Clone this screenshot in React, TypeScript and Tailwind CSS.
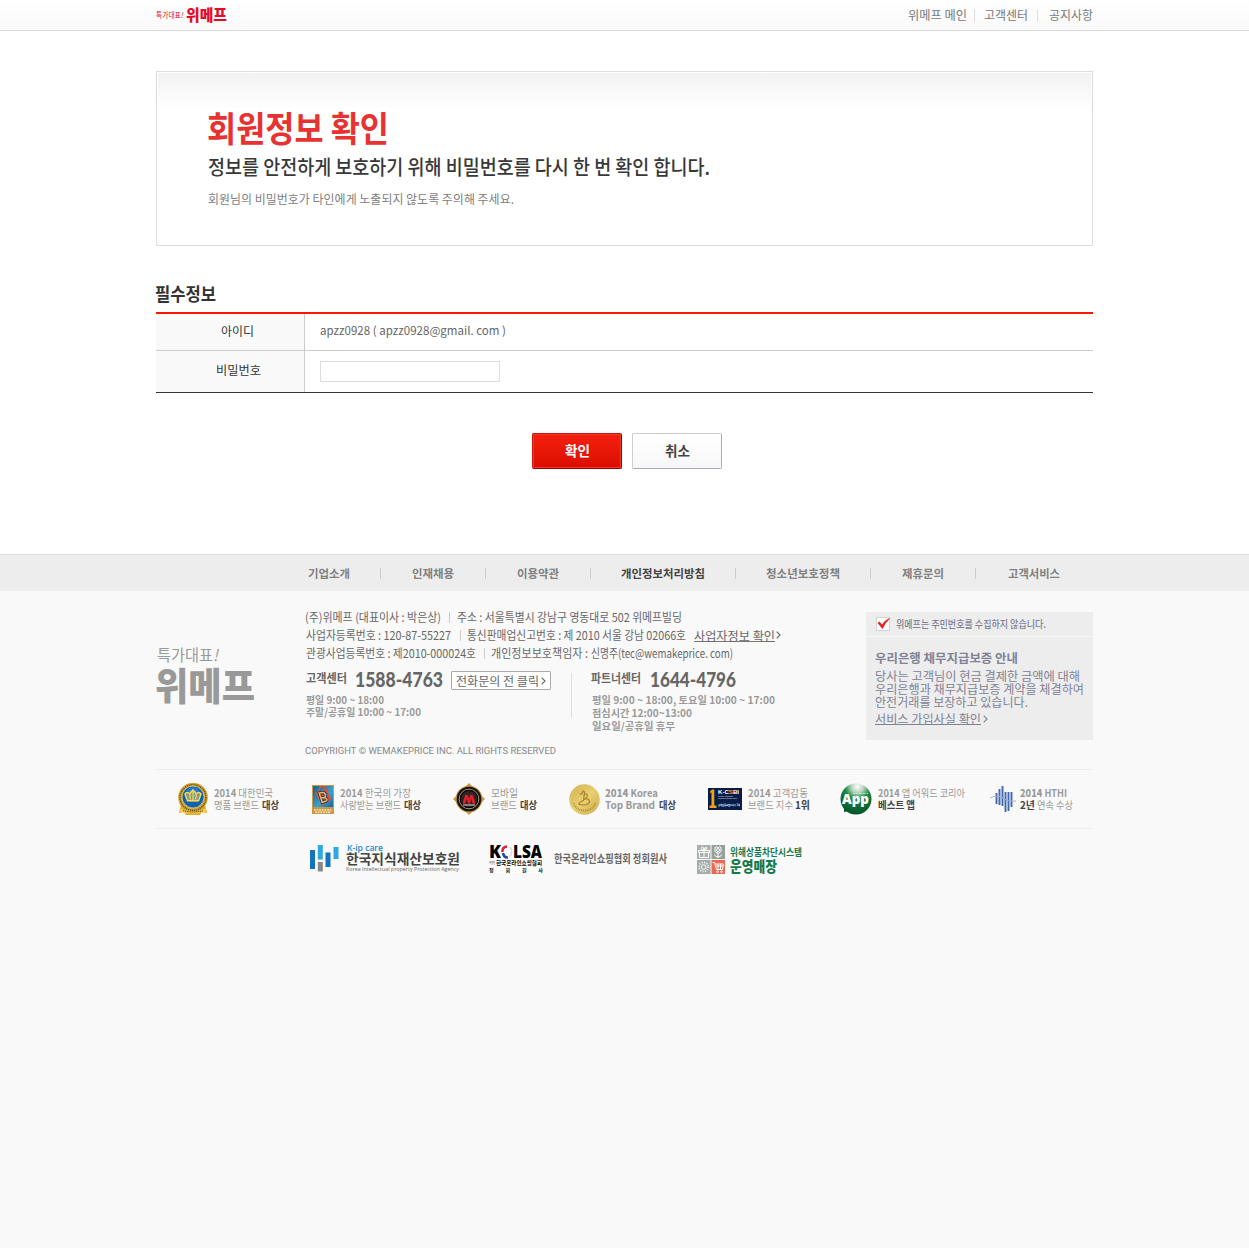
import React, { useLayoutEffect, useRef, useState } from "react";

/* Single line of text stretched or condensed to the width of its box. */
function Fit({ className = "", children }: { className?: string; children: React.ReactNode }) {
  const box = useRef<HTMLSpanElement>(null);
  const inner = useRef<HTMLSpanElement>(null);
  const [scale, setScale] = useState(1);
  useLayoutEffect(() => {
    if (box.current && inner.current) {
      const natural = inner.current.getBoundingClientRect().width;
      if (natural > 0) setScale(box.current.clientWidth / natural);
    }
  }, []);
  return (
    <span ref={box} className={`block shrink-0 whitespace-nowrap ${className}`}>
      <span ref={inner} className="inline-block origin-left" style={{ transform: `scaleX(${scale})` }}>
        {children}
      </span>
    </span>
  );
}

function Sep({ className }: { className: string }) {
  return <span className={`block w-px shrink-0 ${className}`} />;
}

function Chevron({ className = "" }: { className?: string }) {
  return (
    <svg className={`h-[8px] w-[5px] shrink-0 ${className}`} viewBox="0 0 5 8" fill="none" stroke="currentColor" strokeWidth="1.1">
      <path d="M.7.7 4 4 .7 7.3" />
    </svg>
  );
}

function CrownMedal() {
  return (
    <svg className="h-[32px] w-[30px]" viewBox="0 0 30 32">
      <path d="M3 22 1 30l5-1 2 3h14l2-3 5 1-2-8z" fill="#e0ac2a" />
      <circle cx="15" cy="14.500" r="14.800" fill="#d6a632" />
      <circle cx="15" cy="14.500" r="12.900" fill="none" stroke="#5b4723" strokeWidth="1.500" strokeDasharray="1.1 .9" />
      <circle cx="15" cy="14" r="11" fill="#0d62b5" stroke="#f0ca58" strokeWidth=".8" />
      <circle cx="15" cy="11" r="7" fill="#2b8bd8" opacity=".6" />
      <path d="M9.400 17.500 7 11q2-3 5 0 .5-2.500 3-3.500 2.500 1 3 3.500 3-3 5 0l-2.400 6.500z" fill="#e6b83c" fillOpacity=".5" stroke="#f8d85e" strokeWidth="1.400" />
      <path d="M15 6v11M9.300 18h11.400M11.500 12l1 4M18.500 12l-1 4" stroke="#f8d85e" strokeWidth="1.200" />
      <path d="M2 25.500q13 5 26 0l1 3q-14 4-28 0z" fill="#f6cf4a" />
      <path d="M5 27.700q10 2.300 20 0" fill="none" stroke="#80601b" strokeWidth="1.200" strokeDasharray="1.500 .6" />
    </svg>
  );
}

function BrandTile() {
  return (
    <svg className="h-[29px] w-[22px]" viewBox="0 0 22 29">
      <defs>
        <linearGradient id="tile" x1="0" y1="0" x2="1" y2="1">
          <stop offset="0" stopColor="#1d5f8e" />
          <stop offset=".6" stopColor="#3f9fc8" />
          <stop offset="1" stopColor="#15669c" />
        </linearGradient>
      </defs>
      <rect width="22" height="29" fill="#c8994a" />
      <rect x="1" y="1" width="20" height="21" fill="url(#tile)" />
      <path d="M7 6q0-4.500 3.500-4.500T14 5" fill="none" stroke="#dc5336" strokeWidth="1.500" />
      <path d="m3 7.500 11-3.500 5.500 10.500-9.500 6z" fill="#e44c2d" />
      <path d="m7.200 8 3 9.500 3.600-1.300q2.800-2-1.100-3.600 1.900-2.800-.6-4.800-2.300-.8-4.900.2zm1.500 5 3.700-.5" fill="none" stroke="#16436e" strokeWidth="3.200" />
      <path d="m7.200 8 3 9.500 3.600-1.300q2.800-2-1.100-3.600 1.900-2.800-.6-4.800-2.300-.8-4.900.2zm1.500 5 3.700-.5" fill="none" stroke="#f6b15e" strokeWidth="1.500" />
      <path d="M2 25h18M3 27.300h16" stroke="#efdbab" strokeWidth="1.500" strokeDasharray="2 .6" />
    </svg>
  );
}

function MobileBadge() {
  return (
    <svg className="h-[32px] w-[32px]" viewBox="0 0 32 32">
      <path d="M16 0 32 16 16 32 0 16z" fill="#c99c43" />
      <circle cx="16" cy="16" r="13.300" fill="#c08f35" />
      <circle cx="16" cy="16" r="12.300" fill="#17110e" />
      <circle cx="16" cy="16" r="9.800" fill="none" stroke="#b5a081" strokeWidth=".9" />
      <circle cx="16" cy="16" r="8.600" fill="#2e2525" stroke="#000" />
      <path d="m9.500 20.500 2.800-8.500h2.400L16 16l1.300-4h2.400l2.800 8.500h-3l-1-5-1.600 5h-1.800l-1.600-5-1 5z" fill="#ec1c2a" />
      <path d="M10 22h12" stroke="#f2eeee" strokeWidth=".9" />
    </svg>
  );
}

function GoldCoin() {
  return (
    <svg className="h-[31px] w-[31px]" viewBox="0 0 31 31">
      <defs>
        <linearGradient id="coin" x1="0" y1="0" x2="1" y2="1">
          <stop offset="0" stopColor="#cfae48" />
          <stop offset=".5" stopColor="#ead174" />
          <stop offset="1" stopColor="#c9a843" />
        </linearGradient>
      </defs>
      <circle cx="15.500" cy="15.500" r="15.200" fill="url(#coin)" />
      <circle cx="15.500" cy="15.500" r="13.500" fill="none" stroke="#dfc667" />
      <path d="M10.500 10q3 .5 3.500-3l1.500 1-1 8.500q-3.500 1-5 3.500 5 2 9.500 0 3.200-3-.5-5-2-.6-4 .7 4.600-2.500 3.700-5-1.200-1.600-3 .2" fill="none" stroke="#a77d22" strokeWidth="1.100" />
      <path d="M4.500 19q3 7.500 11 7.500T26.500 19" fill="none" stroke="#b08d36" strokeWidth="1.600" strokeDasharray="1 .8" />
    </svg>
  );
}

function Kcsbi() {
  return (
    <span className="flex h-[22px] w-[34px] bg-[#071d47] font-['Liberation_Sans'] font-bold text-white">
      <svg className="mt-[1px] ml-[1px] h-[19px] w-[8px] shrink-0" viewBox="0 0 8 19">
        <path d="M1 4V2.500L3 .5h2.300V16.500H7.500V19H.5v-2.500h2V3.500z" fill="#f5a01b" />
      </svg>
      <span className="flex flex-col">
        <Fit className="mt-[1px] ml-[1px] h-[6px] w-[21px] text-[6px] leading-[6px]">K-C<b className="text-[#f5a01b]">S</b>BI</Fit>
        <Fit className="ml-[1px] h-[3px] w-[15px] text-[2px] leading-[2px] opacity-70">Korean Customer</Fit>
        <Fit className="ml-[1px] h-[6px] w-[19px] text-[2px] leading-[1px] opacity-70">Surprised Brand Index</Fit>
        <Fit className="ml-[1px] h-[3px] w-[22px] text-[3px] leading-[3px]">고객감동브랜드지수 1위</Fit>
      </span>
    </span>
  );
}

function AppBadge() {
  return (
    <span className="relative block h-[32px] w-[32px]">
      <svg className="h-[32px] w-[32px]" viewBox="0 0 32 32">
        <defs>
          <radialGradient id="globe" cx=".55" cy=".1" r=".9">
            <stop offset="0" stopColor="#fff" />
            <stop offset=".22" stopColor="#b4d4bc" />
            <stop offset=".45" stopColor="#1a8743" />
            <stop offset="1" stopColor="#04522a" />
          </radialGradient>
        </defs>
        <path d="M4 24v5l5-1z" fill="#04532a" />
        <circle cx="16" cy="16" r="15.500" fill="url(#globe)" />
        <path d="M13 10.500h15" stroke="#d8eadd" strokeWidth=".8" strokeDasharray="1 .4" />
      </svg>
      <Fit className="absolute top-[8px] left-[2px] w-[27px] font-['Open_Sans'] text-[14px] leading-[16px] font-extrabold text-white">App</Fit>
    </span>
  );
}

function Hthi() {
  return (
    <svg className="-ml-px h-[28px] w-[27px]" viewBox="0 0 27 28" fill="none">
      <path d="M6.500 8v11M9.500 4v16M12.500 1v20M15.500 7v20M18.500 7v19M21.500 7v15" stroke="#4067b0" strokeWidth="1.900" />
      <path d="M0 13q8-4 13 0t13 3" stroke="#a3b0c5" strokeWidth="1" />
    </svg>
  );
}

function KipIcon() {
  return (
    <svg className="h-[27px] w-[29px]" viewBox="0 0 29 27">
      <path d="M0 5h5v19H0zM15.500 7.500h5V22h-5z" fill="#1473bc" />
      <path d="M7.800 0h5v14.500h-5zM23.500 2h5v12h-5z" fill="#2da9e1" />
      <path d="M7.800 17h5v9.500h-5z" fill="#888" />
    </svg>
  );
}

function Kolsa() {
  return (
    <span className="flex h-[28px] w-[54px] flex-col bg-white text-black">
      <span className="flex h-[14px] items-center font-['Open_Sans'] font-extrabold">
        <Fit className="w-[12px] text-[17px] leading-[14px]">K</Fit>
        <svg className="h-[14px] w-[12px]" viewBox="0 0 12 14" fill="none" strokeWidth="2.600">
          <path d="M6 1.500Q1 2 1.500 7" stroke="#df2135" />
          <path d="M2 8q1 5 5 4.500" stroke="#214a9c" />
          <path d="M9 2q3.500 5-.5 10" stroke="#d9dbe4" strokeWidth="1.500" />
        </svg>
        <Fit className="w-[29px] text-[17px] leading-[14px]">LSA</Fit>
      </span>
      <span className="mt-[1px] flex h-[6px] items-center">
        <Fit className="w-[6px] text-[3px] leading-[6px]">사단법인</Fit>
        <Fit className="ml-[1px] w-[46px] text-[6px] leading-[6px] font-bold">한국온라인쇼핑협회</Fit>
      </span>
      <span className="mt-[1px] flex h-[5px] justify-between text-[5px] leading-[5px] font-bold">
        <span>정</span><span>회</span><span>원</span><span>사</span>
      </span>
    </span>
  );
}

function SafeShop() {
  return (
    <svg className="h-[29px] w-[28px]" viewBox="0 0 28 29" fill="none">
      <path d="M0 0h13.500v14H0z" fill="#a9b0ab" />
      <path d="M14.500 0H28v14H14.500z" fill="#96a09a" />
      <path d="M0 15h13.500v14H0z" fill="#a5aca7" />
      <path d="M14.500 15H28v14H14.500z" fill="#ef674f" />
      <g stroke="#fff">
        <path d="M1.500 5.500h11v2h-11zM2.500 7.500v5h9v-5M7 5v8M7 5Q3 5 4.500 2.500T7 5q0-3 2.500-2.500T7 5" />
        <circle cx="21" cy="5" r="1.500" />
        <path d="M18 2.500l1.500-.7 1.500 1 1.500-1 1.500.7v4L22 8h-2l-2-1.500zM21 8v5m0-1q-3 0-3.500-2.500m3.500 2.500q3 0 3.500-2.500" />
        <circle cx="6.700" cy="22" r="2.300" />
        <circle cx="6.700" cy="22" r="4.600" strokeWidth="1.800" strokeDasharray="1 1.400" />
        <path d="M15.500 17.500h2l2 7h6l1-5.500H18M19 21h7M21 19v5M23.500 19v5" />
        <circle cx="20.500" cy="26.700" r=".9" />
        <circle cx="24.500" cy="26.700" r=".9" />
      </g>
    </svg>
  );
}

const topLinks = "text-[12px] leading-[18px] text-[#777]";

const footerMenu = [
  { label: "기업소개", cell: "w-[103px]", text: "w-[42px] text-[#808080]" },
  { label: "인재채용", cell: "w-[105px] pr-px", text: "w-[42px] text-[#808080]" },
  { label: "이용약관", cell: "w-[105px] pr-px", text: "w-[42px] text-[#808080]" },
  { label: "개인정보처리방침", cell: "w-[145px]", text: "w-[84px] text-[#444]" },
  { label: "청소년보호정책", cell: "w-[135px] pr-px", text: "w-[74px] text-[#808080]" },
  { label: "제휴문의", cell: "w-[105px] pr-px", text: "w-[42px] text-[#808080]" },
  { label: "고객서비스", cell: "w-[115px]", text: "w-[52px] text-[#808080]" },
];

const awards = [
  { icon: <CrownMedal />, cell: "w-[134px]", slot: "w-[36px]", top: "2014 대한민국", topW: "w-[59px]", a: "명품 브랜드", aW: "w-[45px] text-[#999]", b: "대상", bW: "ml-[3px] w-[17px] font-bold text-[#444]" },
  { icon: <BrandTile />, cell: "w-[141px]", slot: "w-[28px]", top: "2014 한국의 가장", topW: "w-[71px]", a: "사랑받는 브랜드", aW: "w-[61px] text-[#999]", b: "대상", bW: "ml-[3px] w-[17px] font-bold text-[#444]" },
  { icon: <MobileBadge />, cell: "w-[116px]", slot: "w-[38px]", top: "모바일", topW: "w-[27px]", a: "브랜드", aW: "w-[26px] text-[#999]", b: "대상", bW: "ml-[3px] w-[17px] font-bold text-[#444]" },
  { icon: <GoldCoin />, cell: "w-[139px]", slot: "w-[36px]", top: "2014 Korea", topW: "w-[53px] font-bold", a: "Top Brand", aW: "w-[50px] font-bold text-[#999]", b: "대상", bW: "ml-[4px] w-[17px] font-bold text-[#444]" },
  { icon: <Kcsbi />, cell: "w-[132px]", slot: "w-[40px]", top: "2014 고객감동", topW: "w-[60px]", a: "브랜드 지수", aW: "w-[45px] text-[#999]", b: "1위", bW: "ml-[2px] w-[15px] font-bold text-[#444]" },
  { icon: <AppBadge />, cell: "w-[151px]", slot: "w-[38px]", top: "2014 앱 어워드 코리아", topW: "w-[87px]", a: "베스트 앱", aW: "w-[37px] font-bold text-[#444]", b: "", bW: "" },
  { icon: <Hthi />, cell: "w-[102px]", slot: "w-[29px]", top: "2014 HTHI", topW: "w-[47px] font-bold", a: "2년", aW: "w-[15px] font-bold text-[#444]", b: "연속 수상", bW: "ml-[2px] w-[36px] text-[#999]" },
];

function Header() {
  return (
    <header className="h-[31px] border-b border-[#ddd] bg-linear-to-b from-white to-[#f9f9f9]">
      <div className="mx-auto flex h-[29px] w-[937px] items-center justify-between">
        <div className="flex items-center text-[#e60a28]">
          <Fit className="w-[27px] text-[8px] leading-[20px]">특가대표<i>!</i></Fit>
          <Fit className="ml-[3px] w-[41px] pb-[2px] text-[16px] leading-[24px] font-black">위메프</Fit>
        </div>
        <nav className={`flex items-center ${topLinks}`}>
          <Fit className="w-[59px]">위메프 메인</Fit>
          <Sep className="mt-[3px] mr-[9px] ml-[7px] h-[12px] bg-[#ddd]" />
          <Fit className="w-[44px]">고객센터</Fit>
          <Sep className="mt-[3px] mr-[11px] ml-[9px] h-[12px] bg-[#ddd]" />
          <Fit className="w-[44px]">공지사항</Fit>
        </nav>
      </div>
    </header>
  );
}

function Main() {
  return (
    <main className="h-[523px] bg-white pt-[40px]">
      <div className="mx-auto w-[937px]">
        <section className="h-[175px] border border-[#ddd] p-px">
          <div className="h-full bg-linear-to-b from-[#f2f2f2] to-white to-[38px] pt-[33px] pl-[49px]">
            <Fit className="h-[42px] w-[182px] text-[35px] leading-[42px] font-bold text-[#e83232]">회원정보 확인</Fit>
            <Fit className="mt-[5px] ml-px h-[28px] w-[502px] text-[20px] leading-[28px] font-medium text-[#383838]">정보를 안전하게 보호하기 위해 비밀번호를 다시 한 번 확인 합니다.</Fit>
            <Fit className="mt-[8px] ml-px h-[20px] w-[306px] text-[12.5px] leading-[20px] text-[#808080]">회원님의 비밀번호가 타인에게 노출되지 않도록 주의해 주세요.</Fit>
          </div>
        </section>

        <h2 className="mt-[34px] -ml-px h-[32px] text-[18px] leading-[26px] font-bold text-[#333]">
          <Fit className="w-[61px]">필수정보</Fit>
        </h2>
        <div className="border-t-2 border-b border-t-[#ff1400] border-b-[#333] text-[12px] leading-[18px]">
          <div className="flex h-[37px] border-b border-[#ccc]">
            <div className="flex w-[149px] justify-center border-r border-[#ccc] bg-[#f9f9f9] pt-[8px] pl-[14px] text-[#333]">
              <Fit className="w-[33px]">아이디</Fit>
            </div>
            <div className="pt-[7px] pl-[15px] text-[11.5px] text-[#666]">
              <Fit className="w-[186px]">apzz0928 ( apzz0928@gmail. com )</Fit>
            </div>
          </div>
          <div className="flex h-[41px]">
            <div className="flex w-[149px] justify-center border-r border-[#ccc] bg-[#f9f9f9] pt-[10px] pl-[16px] text-[#333]">
              <Fit className="w-[45px]">비밀번호</Fit>
            </div>
            <div className="pt-[10px] pl-[15px]">
              <input type="password" className="block h-[21px] w-[180px] border border-[#ddd] bg-white px-1 outline-none" />
            </div>
          </div>
        </div>

        <div className="mt-[40px] flex gap-[10px] pl-[376px] text-[13.500px] leading-[18px]">
          <button className="flex h-[36px] w-[90px] items-center justify-center rounded-[2px] border border-[#cb170b] border-r-[#8d0a04] border-b-[#8d0a04] bg-linear-to-b from-[#f3200f] to-[#dc0d00] pb-[3px] font-bold text-white shadow-[inset_0_0_0_1px_#f3372a]">
            <Fit className="w-[25px]">확인</Fit>
          </button>
          <button className="flex h-[36px] w-[90px] items-center justify-center rounded-[2px] border border-[#cdced2] border-r-[#a9abb7] border-b-[#a9abb7] bg-linear-to-b from-white to-[#f7f7f7] pb-[3px] font-bold text-[#444]">
            <Fit className="w-[25px]">취소</Fit>
          </button>
        </div>
      </div>
    </main>
  );
}

function CompanyInfo() {
  return (
    <div className="w-[561px] pt-[17px] text-[12px] leading-[18px] text-[#666]">
      <div className="flex h-[18px] items-center">
        <Fit className="w-[136px]">(주)위메프 (대표이사 : 박은상)</Fit>
        <Sep className="mr-[7px] ml-[8px] h-[11px] bg-[#ccc]" />
        <Fit className="w-[225px]">주소 : 서울특별시 강남구 영동대로 502 위메프빌딩</Fit>
      </div>
      <div className="flex h-[18px] items-center pl-px">
        <Fit className="w-[145px]">사업자등록번호 : 120-87-55227</Fit>
        <Sep className="mr-[6px] ml-[9px] h-[11px] bg-[#ccc]" />
        <Fit className="w-[219px]">통신판매업신고번호 : 제 2010 서울 강남 02066호</Fit>
        <Fit className="ml-[8px] h-[13px] w-[81px] border-b border-[#777] leading-[13px]">사업자정보 확인</Fit>
        <Chevron className="ml-[1px]" />
      </div>
      <div className="flex h-[18px] items-center pl-px">
        <Fit className="w-[170px]">관광사업등록번호 : 제2010-000024호</Fit>
        <Sep className="mr-[6px] ml-[8px] h-[11px] bg-[#ccc]" />
        <Fit className="w-[97px]">개인정보보호책임자 :</Fit>
        <Fit className="ml-[3px] w-[142px]">신명주(tec@wemakeprice. com)</Fit>
      </div>
      <div className="mt-[9px] flex h-[69px]">
        <div className="w-[266px]">
          <div className="flex h-[20px] items-start pl-px">
            <Fit className="w-[41px] leading-[14px] font-bold">고객센터</Fit>
            <Fit className="-mt-px ml-[8px] w-[88px] font-['Lato'] text-[20px] leading-[19px] font-black">1588-4763</Fit>
            <div className="ml-[8px] flex h-[19px] w-[100px] items-center rounded-[1px] border border-[#aaa] bg-white pl-[4px]">
              <Fit className="w-[83px] leading-[17px]">전화문의 전 클릭</Fit>
              <Chevron className="ml-[2px]" />
            </div>
          </div>
          <div className="mt-[3px] pl-px text-[10.500px] leading-[12px] font-bold text-[#999]">
            <Fit className="h-[12px] w-[78px]">평일 9:00 ~ 18:00</Fit>
            <Fit className="h-[12px] w-[115px]">주말/공휴일 10:00 ~ 17:00</Fit>
          </div>
        </div>
        <Sep className="mt-[2px] h-[45px] bg-[#ddd]" />
        <div className="pl-[19px]">
          <div className="flex h-[20px] items-start">
            <Fit className="w-[50px] leading-[14px] font-bold">파트너센터</Fit>
            <Fit className="-mt-px ml-[9px] w-[86px] font-['Lato'] text-[20px] leading-[19px] font-black">1644-4796</Fit>
          </div>
          <div className="mt-[2px] pl-px text-[10.500px] leading-[13px] font-bold text-[#999]">
            <Fit className="h-[13px] w-[183px]">평일 9:00 ~ 18:00, 토요일 10:00 ~ 17:00</Fit>
            <Fit className="h-[13px] w-[100px]">점심시간 12:00~13:00</Fit>
            <Fit className="h-[13px] w-[83px]">일요일/공휴일 휴무</Fit>
          </div>
        </div>
      </div>
      <Fit className="mt-[4px] h-[14px] w-[251px] font-['Roboto'] text-[9.500px] leading-[14px] text-[#888]">COPYRIGHT © WEMAKEPRICE INC. ALL RIGHTS RESERVED</Fit>
    </div>
  );
}

function BankNotice() {
  return (
    <aside className="mt-[21px] h-[128px] w-[227px] bg-[#ededed] text-[12px] leading-[13px] text-[#808294]">
      <div className="flex h-[25px] items-center border-b border-[#f9f9f9] pl-[10px]">
        <span className="block h-[14px] w-[14px] border border-[#d5d5d5] bg-white">
          <svg className="h-[12px] w-[13px]" viewBox="0 0 13 12">
            <path d="M.5 5 2.500 3.500 5 6.500Q8 2 12.500 0L13 .5Q8 5 5.500 11z" fill="#ea2525" />
          </svg>
        </span>
        <Fit className="-mt-[2px] ml-[6px] w-[150px] text-[10.500px] font-medium">위메프는 주민번호를 수집하지 않습니다.</Fit>
      </div>
      <div className="pt-[14px] pl-[9px]">
        <Fit className="h-[13px] w-[143px] font-bold">우리은행 채무지급보증 안내</Fit>
        <div className="mt-[5px]">
          <Fit className="h-[13px] w-[205px]">당사는 고객님이 현금 결제한 금액에 대해</Fit>
          <Fit className="h-[13px] w-[209px]">우리은행과 채무지급보증 계약을 체결하여</Fit>
          <Fit className="h-[13px] w-[153px]">안전거래를 보장하고 있습니다.</Fit>
        </div>
        <div className="mt-[4px] flex items-center">
          <Fit className="h-[13px] w-[106px] border-b border-[#808294]">서비스 가입사실 확인</Fit>
          <Chevron className="ml-[2px]" />
        </div>
      </div>
    </aside>
  );
}

function Footer() {
  return (
    <footer>
      <div className="h-[37px] border-t border-[#ddd] bg-[#ededed]">
        <nav className="mx-auto flex h-[36px] w-[937px] items-center pl-[122px] text-[11.500px] leading-[18px] font-bold">
          {footerMenu.map((m, i) => (
            <div key={m.label} className={`flex h-[11px] items-center justify-center ${i < 6 ? "border-r border-[#ccc]" : ""} ${m.cell}`}>
              <Fit className={m.text}>{m.label}</Fit>
            </div>
          ))}
        </nav>
      </div>
      <div className="mx-auto w-[937px]">
        <div className="flex h-[178px]">
          <div className="w-[149px] pt-[53px] text-[#999]">
            <Fit className="ml-px h-[21px] w-[61px] text-[16px] leading-[21px]">특가대표<i>!</i></Fit>
            <Fit className="-ml-px h-[42px] w-[100px] text-[38px] leading-[38px] font-black">위메프</Fit>
          </div>
          <CompanyInfo />
          <BankNotice />
        </div>

        <div className="flex h-[60px] border-y border-[#eee] pl-[22px]">
          {awards.map((a) => (
            <div key={a.top} className={`flex items-center ${a.cell}`}>
              <div className={`shrink-0 ${a.slot}`}>{a.icon}</div>
              <div className="text-[10.500px] leading-[12px] text-[#999]">
                <Fit className={`h-[12px] ${a.topW}`}>{a.top.startsWith("2014") ? <><b>2014</b>{a.top.slice(4)}</> : a.top}</Fit>
                <div className="flex h-[12px]">
                  <Fit className={a.aW}>{a.a}</Fit>
                  {a.b && <Fit className={a.bW}>{a.b}</Fit>}
                </div>
              </div>
            </div>
          ))}
        </div>

        <div className="flex pt-[16px] pl-[154px]">
          <div className="flex w-[179px]">
            <div className="w-[36px]"><KipIcon /></div>
            <div className="-mt-[2px]">
              <Fit className="ml-px h-[8px] w-[36px] font-['Open_Sans'] text-[8px] leading-[9px] font-semibold text-[#2586c7]">K-ip care</Fit>
              <Fit className="h-[15px] w-[114px] text-[13.5px] leading-[15px] font-bold text-[#444]">한국지식재산보호원</Fit>
              <Fit className="h-[6px] w-[113px] font-['Open_Sans'] text-[5.500px] leading-[6px] text-[#666]">Korea Intellectual property Protection Agency</Fit>
            </div>
          </div>
          <div className="flex w-[208px]">
            <Kolsa />
            <Fit className="mt-[4px] ml-[11px] w-[113px] text-[11px] leading-[18px] font-bold text-[#666]">한국온라인쇼핑협회 정회원사</Fit>
          </div>
          <div className="flex text-[#16794c]">
            <SafeShop />
            <div className="ml-[5px] pt-[1px]">
              <Fit className="h-[12px] w-[72px] text-[10px] leading-[12px] font-bold">위해상품차단시스템</Fit>
              <Fit className="h-[16px] w-[47px] text-[15px] leading-[16px] font-black">운영매장</Fit>
            </div>
          </div>
        </div>
      </div>
    </footer>
  );
}

export default function App() {
  return (
    <div className="min-h-screen bg-[#f9f9f9] font-['Noto_Sans_CJK_KR',sans-serif]">
      <Header />
      <Main />
      <Footer />
    </div>
  );
}
